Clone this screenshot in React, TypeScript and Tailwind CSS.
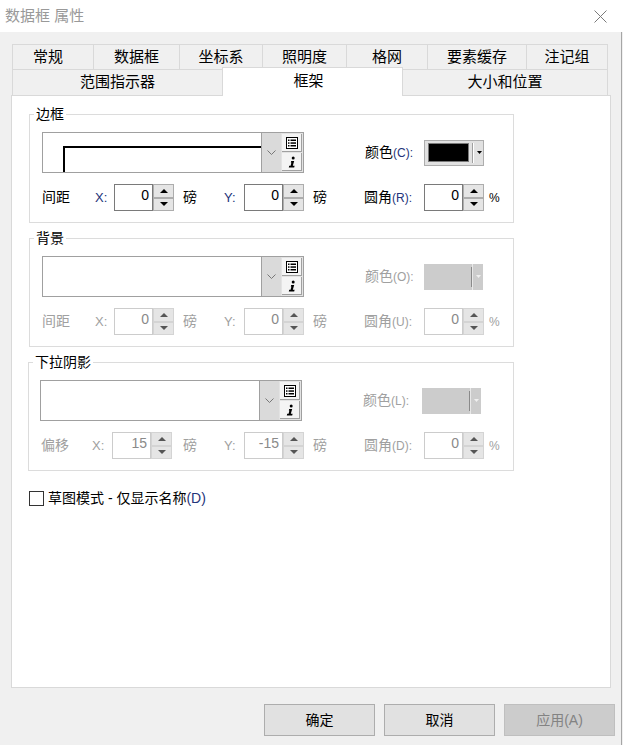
import React from "react";

const FONT = "font-['Liberation_Sans','Noto_Sans_CJK_SC',sans-serif]";

function ListIcon() {
  return (
    <svg width="12" height="12" viewBox="0 0 12 12">
      <rect x="0.5" y="0.5" width="11" height="11" fill="white" stroke="black" />
      <rect x="2" y="2.5" width="1.5" height="1.5" fill="black" />
      <rect x="4.5" y="2.5" width="5.5" height="1.5" fill="black" />
      <rect x="2" y="5.3" width="1.5" height="1.5" fill="black" />
      <rect x="4.5" y="5.3" width="5.5" height="1.5" fill="black" />
      <rect x="2" y="8" width="1.5" height="1.5" fill="black" />
      <rect x="4.5" y="8" width="5.5" height="1.5" fill="black" />
    </svg>
  );
}

function PropIcon() {
  return (
    <svg width="10" height="12" viewBox="0 0 10 12">
      <circle cx="6.2" cy="2" r="1.5" fill="black" />
      <path d="M4.2 5 L7.2 5 L5.8 9.8 L7.6 9.8 L7.2 11.4 L1.8 11.4 L2.2 9.8 L3.6 9.8 L4.4 6.6 L3.8 6.6 Z" fill="black" />
    </svg>
  );
}

function Combo({ preview }: { preview?: boolean }) {
  return (
    <div className="flex h-[41px] w-[262px] border border-[#a0a0a0] bg-white">
      <div className="flex-1">
        {preview && (
          <svg width="218" height="39" viewBox="0 0 218 39">
            <path d="M21 39 L21 14 L218 14" fill="none" stroke="black" strokeWidth="2" />
          </svg>
        )}
      </div>
      <div className="flex w-[20px] items-center justify-center border-l border-[#a0a0a0] bg-[#dadada]">
        <svg width="9" height="5" viewBox="0 0 9 5">
          <path d="M0.5 0.5 L4.5 4.5 L8.5 0.5" fill="none" stroke="#777" strokeWidth="1" />
        </svg>
      </div>
      <div className="flex w-[22px] flex-col gap-[1px] bg-[#e3e3e3] p-[1px]">
        <div className="flex h-[18px] items-center justify-center border-b border-r border-[#a0a0a0] bg-[#f4f4f4]">
          <ListIcon />
        </div>
        <div className="flex h-[18px] items-center justify-center border-b border-r border-[#a0a0a0] bg-[#f4f4f4]">
          <PropIcon />
        </div>
      </div>
    </div>
  );
}

function Arrow({ up, disabled }: { up?: boolean; disabled?: boolean }) {
  return (
    <div
      className={`flex flex-1 items-center justify-center border bg-[#e5e5e5] ${
        disabled ? "border-[#d4d4d4]" : "border-[#adadad]"
      }`}
    >
      <svg width="8" height="4" viewBox="0 0 8 4">
        <path d={up ? "M0 4 L4 0 L8 4 Z" : "M0 0 L4 4 L8 0 Z"} fill={disabled ? "#555" : "black"} />
      </svg>
    </div>
  );
}

function Spinner({ value, disabled }: { value: string; disabled?: boolean }) {
  return (
    <div className="flex h-[27px] w-[60px]">
      <div
        className={`flex flex-1 justify-end border bg-white pr-[3px] pt-[1px] text-[14px] leading-[18px] ${
          disabled ? "border-[#cccccc] text-[#8a8a8a]" : "border-[#7a7a7a] text-black"
        }`}
      >
        {value}
      </div>
      <div className="flex w-[21px] flex-col">
        <Arrow up disabled={disabled} />
        <Arrow disabled={disabled} />
      </div>
    </div>
  );
}

function ColorButton({ disabled }: { disabled?: boolean }) {
  if (disabled) {
    return (
      <div className="flex h-[26px] w-[59px] items-center bg-[#cccccc]">
        <div className="w-[47px]" />
        <div className="h-[20px] w-[1px] bg-[#8a8a8a]" />
        <div className="w-[1px] self-stretch bg-[#e8e8e8]" />
        <svg className="ml-[3px]" width="5" height="3" viewBox="0 0 5 3">
          <path d="M0 0 L2.5 3 L5 0 Z" fill="#f0f0f0" />
        </svg>
      </div>
    );
  }
  return (
    <div className="flex h-[26px] w-[60px] items-center border border-[#adadad] bg-[#e1e1e1] pl-[3px]">
      <div className="h-[19px] w-[41px] border border-[#7a7a7a] bg-black" />
      <div className="ml-[3px] h-[20px] w-[1px] bg-[#a0a0a0]" />
      <div className="h-[20px] w-[1px] bg-white" />
      <svg className="ml-[3px]" width="5" height="3" viewBox="0 0 5 3">
        <path d="M0 0 L2.5 3 L5 0 Z" fill="black" />
      </svg>
    </div>
  );
}

type GroupProps = {
  title: string;
  preview?: boolean;
  disabled?: boolean;
  tight?: boolean;
  offsetLabel: string;
  xVal: string;
  yVal: string;
  colorKey: string;
  cornerKey: string;
  first?: boolean;
};

function Group({ title, preview, disabled, tight, offsetLabel, xVal, yVal, colorKey, cornerKey, first }: GroupProps) {
  const muted = disabled ? "text-[#a0a0a0]" : "text-black";
  const key = disabled ? "text-[#a0a0a0]" : "text-[#24347a]";
  return (
    <div
      className={`relative border border-[#dcdcdc] pb-[11px] pt-[17px] ${first ? "mt-[18px]" : "mt-[15px]"} ${
        tight ? "-ml-px w-[486px] pl-[11px]" : "w-[485px] pl-[12px]"
      }`}
    >
      <span className="absolute -top-[10px] left-[4px] bg-white px-[2px] text-[14px] leading-[18px] text-black">{title}</span>
      <div className="flex items-center">
        <Combo preview={preview} />
        <span className={`ml-[61px] w-[59px] text-[14px] ${muted}`}>
          颜色<span className={`text-[12px] ${key}`}>({colorKey}):</span>
        </span>
        <ColorButton disabled={disabled} />
      </div>
      <div className="mt-[11px] flex items-center text-[14px]">
        <span className={`${tight ? "w-[52px] pl-[1px]" : "w-[53px]"} ${muted}`}>{offsetLabel}</span>
        <span className={`${tight ? "w-[20px]" : "w-[19px]"} text-[13px] ${key}`}>X:</span>
        <Spinner value={xVal} disabled={disabled} />
        <span className={`${tight ? "w-[52px] pl-[11px]" : "w-[50px] pl-[9px]"} ${muted}`}>磅</span>
        <span className={`w-[20px] text-[13px] ${key}`}>Y:</span>
        <Spinner value={yVal} disabled={disabled} />
        <span className={`w-[60px] pl-[9px] ${muted}`}>磅</span>
        <span className={`w-[60px] ${muted}`}>
          圆角<span className={`text-[12px] ${key}`}>({cornerKey}):</span>
        </span>
        <Spinner value="0" disabled={disabled} />
        <span className={`ml-[5px] text-[12px] ${muted}`}>%</span>
      </div>
    </div>
  );
}

const ROW1 = [
  { label: "常规", w: "w-[81px]" },
  { label: "数据框", w: "w-[86px]" },
  { label: "坐标系", w: "w-[83px]" },
  { label: "照明度", w: "w-[84px]" },
  { label: "格网", w: "w-[81px]" },
  { label: "要素缓存", w: "w-[99px]" },
  { label: "注记组", w: "w-[82px]" },
];

export default function App() {
  return (
    <div className={`flex h-[745px] w-[623px] flex-col bg-[#f0f0f0] ${FONT}`}>
      <div className="flex h-[32px] shrink-0 items-center justify-between bg-white pl-[5px] pr-[16px]">
        <span className="text-[15px] text-[#999999]">数据框 属性</span>
        <svg width="13" height="13" viewBox="0 0 13 13">
          <path d="M0.5 0.5 L12.5 12.5 M12.5 0.5 L0.5 12.5" stroke="#7a7a7a" strokeWidth="1" />
        </svg>
      </div>

      <div className="mr-[1px] flex flex-1 flex-col border-r border-[#a6a6a6] pl-[11px] pt-[12px]">
        <div className="ml-[1px] w-[596px] text-[15px] text-black">
          <div className="flex h-[25px]">
            {ROW1.map((t, i) => (
              <div
                key={t.label}
                className={`flex items-center justify-center border-l border-t border-[#d9d9d9] ${t.w} ${
                  i === ROW1.length - 1 ? "border-r" : ""
                } ${i === 0 ? "pr-[10px]" : ""}`}
              >
                {t.label}
              </div>
            ))}
          </div>
          <div className="flex h-[26px]">
            <div className="flex w-[210px] items-center justify-center border-l border-t border-[#d9d9d9]">范围指示器</div>
            <div className="relative z-10 -mt-[2px] flex h-[29px] w-[181px] items-center justify-center border-l border-r border-t border-[#d9d9d9] bg-white pb-[1px] pr-[8px]">
              框架
            </div>
            <div className="flex w-[205px] items-center justify-center border-r border-t border-[#d9d9d9]">大小和位置</div>
          </div>
        </div>

        <div className="h-[593px] w-[600px] shrink-0 border border-[#d9d9d9] bg-white pl-[17px]">
          <Group
            first
            preview
            title="边框"
            offsetLabel="间距"
            xVal="0"
            yVal="0"
            colorKey="C"
            cornerKey="R"
          />
          <Group disabled title="背景" offsetLabel="间距" xVal="0" yVal="0" colorKey="O" cornerKey="U" />
          <Group disabled tight title="下拉阴影" offsetLabel="偏移" xVal="15" yVal="-15" colorKey="L" cornerKey="D" />

          <div className="mt-[17px] flex items-center text-[14px] text-black">
            <div className="h-[15px] w-[15px] border border-[#333333] bg-white" />
            <span className="ml-[4px]">
              草图模式 - 仅显示名称<span className="text-[#24347a]">(D)</span>
            </span>
          </div>
        </div>

        <div className="mt-[16px] flex gap-[9px] pl-[253px] text-[14px]">
          <div className="flex h-[32px] w-[111px] items-center justify-center border border-[#adadad] bg-[#e1e1e1] text-black">
            确定
          </div>
          <div className="flex h-[32px] w-[111px] items-center justify-center border border-[#adadad] bg-[#e1e1e1] text-black">
            取消
          </div>
          <div className="flex h-[32px] w-[111px] items-center justify-center border border-[#bfbfbf] bg-[#cccccc] text-[#838383]">
            应用(A)
          </div>
        </div>
      </div>
    </div>
  );
}
